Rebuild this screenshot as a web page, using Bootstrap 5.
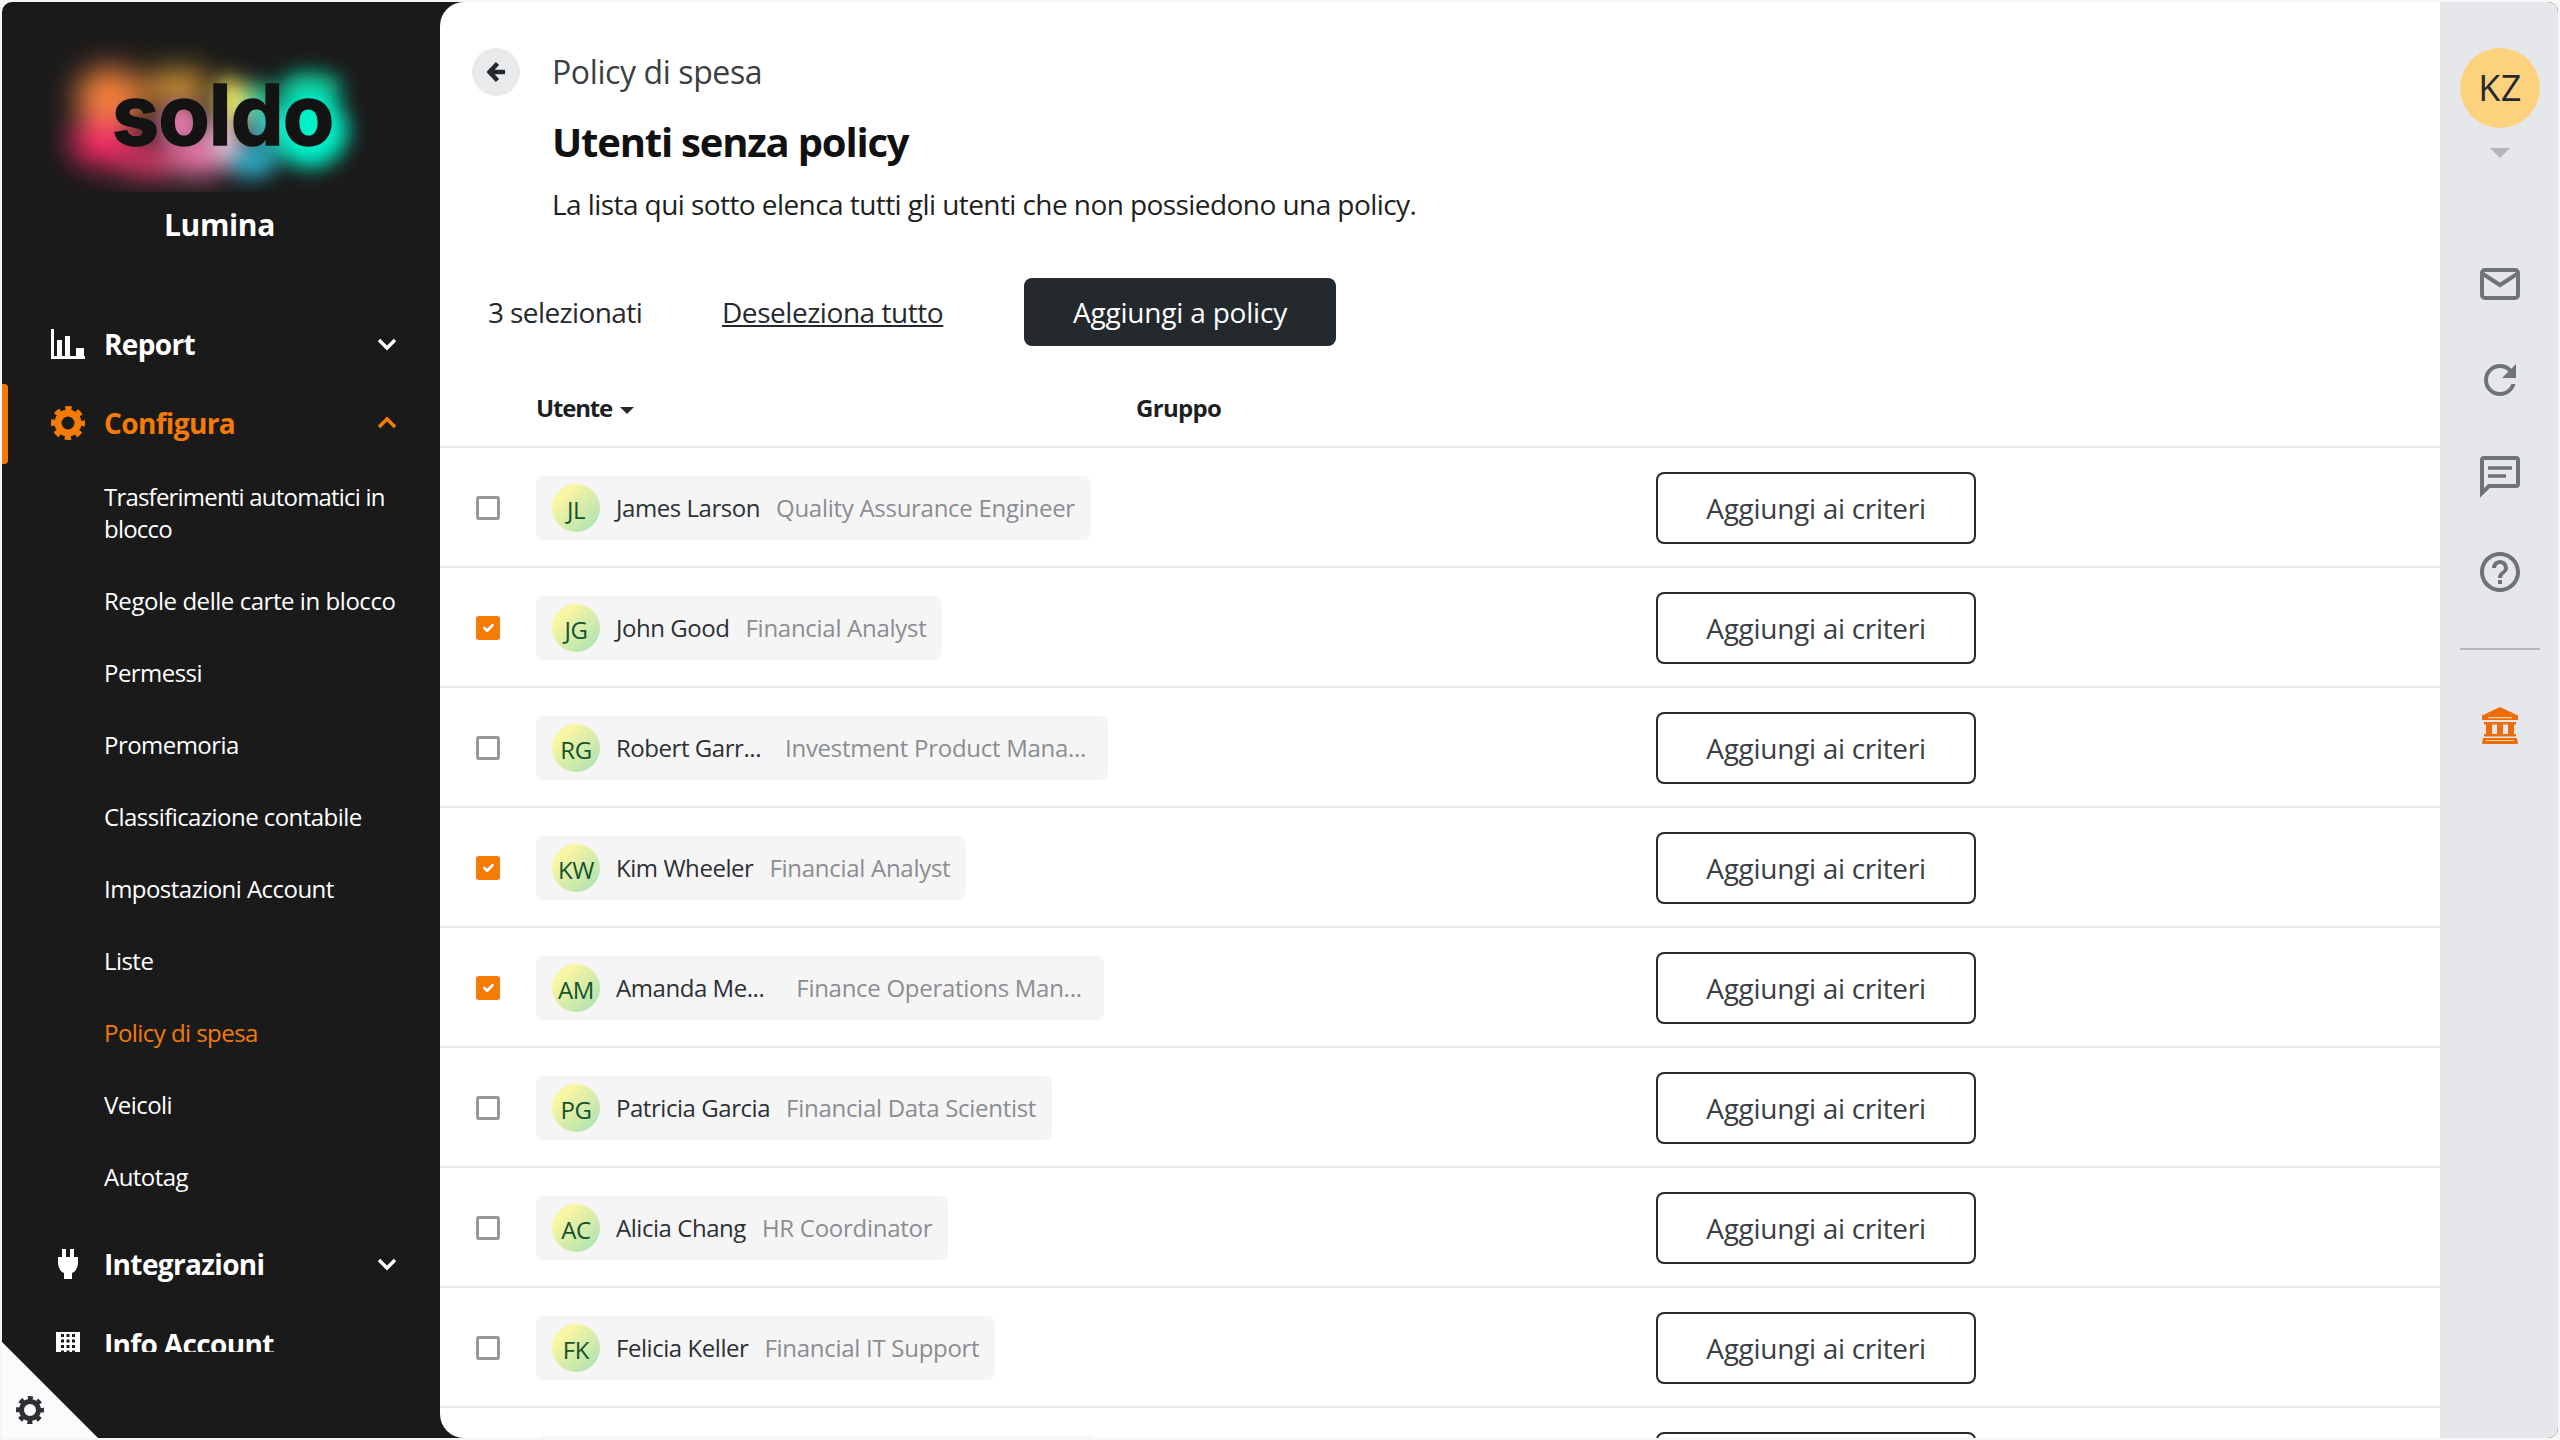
<!DOCTYPE html>
<html lang="it">
<head>
<meta charset="utf-8">
<title>Utenti senza policy</title>
<link href="https://cdn.jsdelivr.net/npm/bootstrap@5.3.0/dist/css/bootstrap.min.css" rel="stylesheet">
<style>
:root{--ink:#24292d;--org:#f47b06;--dark:#1a1a1a}
html,body{height:100%}
body{background:#f6f6f7;overflow:hidden;padding:2px;font-family:"Open Sans","Liberation Sans",sans-serif;color:var(--ink);font-size:24px;letter-spacing:-.35px}
.app-shell{height:1436px;background:var(--dark);border-radius:10px}
.side{width:438px;flex:none;color:#fff}
.logo-svg{display:block;width:438px;height:190px}
.org-name{font-size:30px;font-weight:700;line-height:40px;text-align:center;margin:13px 0 59px -3px;letter-spacing:-.35px}
.side-scroll{height:1048px;overflow:hidden}
.nav-main{height:80px;padding-left:48px;padding-right:43px;font-size:28px;font-weight:700;gap:18px;position:relative;letter-spacing:-.65px}
.nav-main.on{color:var(--org);height:77px}
.nav-main.on::before{content:"";position:absolute;left:0;top:0;width:6px;height:80px;background:var(--org);border-radius:0 4px 4px 0}
.nav-ico{width:36px;flex:none;display:flex;justify-content:center}
.nav-sub{padding:20px 30px 20px 102px;font-size:24px;line-height:32px;letter-spacing:-.55px}
.nav-sub.on{color:var(--org)}
.sub-end{margin-bottom:11px}
.sub-tight{letter-spacing:-.8px}
.sub-wide{letter-spacing:-.45px}
.corner{position:absolute;left:0;bottom:0;width:96px;height:96px;background:#fbfbfb;clip-path:polygon(0 0,100% 100%,0 100%)}
.corner svg{position:absolute;left:14px;bottom:14px}
.content{background:#fff;border-radius:24px 0 0 24px;overflow:hidden;min-width:0}
.crumb{padding:46px 0 0 32px;gap:32px}
.back{width:48px;height:48px;background:#e9eaec;border-radius:50%;padding:0;border:0}
.crumb-txt{font-size:32px;line-height:48px;color:#3a3f43;letter-spacing:-.4px}
.ttl{font-size:40px;line-height:48px;font-weight:700;margin:22px 0 0 112px;color:#111;letter-spacing:-1.2px}
.lead-txt{font-size:28px;line-height:40px;margin:18px 0 0 112px;letter-spacing:-.57px;color:#1d1f21}
.tools{margin:54px 0 0 48px;height:68px}
.tool-txt{font-size:28px;letter-spacing:-.6px}
.sel{width:234px}
.desel{width:302px;color:var(--ink);letter-spacing:-.45px}
.btn-add{background:var(--ink);color:#fff;font-size:28px;width:312px;height:68px;padding:0;border-radius:8px;letter-spacing:-.2px;border:0}
.btn-add:hover{background:var(--ink);color:#fff}
.thead{height:100px;padding:46px 0 0 96px;font-size:24px;font-weight:700;line-height:32px;color:#1c1f22;letter-spacing:-.7px}
.th-user{width:600px;letter-spacing:-1.2px}
.th-caret{display:inline-block;border:7px solid transparent;border-top-color:#24292d;border-bottom:0;margin:0 0 3px 8px}
.urow{height:120px;border-top:2px solid #e9e9eb;padding-left:36px;padding-top:2px}
.form-check-input.chk{width:24px;height:24px;margin:0 36px 0 0;border:3px solid #97989b;border-radius:3px;background-color:#fff;flex:none;float:none}
.form-check-input.chk:checked{background-color:var(--org);border-color:var(--org)}
.user-col{width:1120px;flex:none}
.chip{height:64px;padding:0 16px;background:#f5f5f6;border-radius:8px;gap:16px;font-size:24px;white-space:nowrap;letter-spacing:-.45px}
.chip-cut{padding-right:22px}
.chip-void{width:561px;background:#f5f5f6;height:64px;border-radius:8px}
.ava{width:48px;height:48px;border-radius:50%;background:linear-gradient(135deg,#f8f5a4 25%,#a6e0b2 100%);color:#14532d;font-size:24px;flex:none;padding-top:3px;letter-spacing:-.4px}
.uname{color:#2c3034}
.urole{color:#8b8d91;letter-spacing:-.28px}
.btn-crit{width:320px;height:72px;padding:0;font-size:28px;color:#3a3f43;border:2px solid var(--ink);border-radius:8px;background:#fff;letter-spacing:-.3px}
.rail{width:118px;flex:none;background:#e6e7ea;border-radius:0 10px 10px 0;padding:46px 0 0 2px}
.kz{width:80px;height:80px;border-radius:50%;background:#fdd27e;font-size:36px;color:var(--ink);letter-spacing:.5px}
.kz-caret{border:10px solid transparent;border-top-color:#b5b6ba;border-bottom:0;margin:20px 0 102px}
.rail-ico{height:96px}
.rail-hr{width:80px;height:2px;background:#b5b6ba;margin:4px 0 52px}
</style>
</head>
<body>
<div class="app-shell d-flex">
  <aside class="side position-relative overflow-hidden">
    <svg class="logo-svg" viewBox="0 0 438 190" role="img" aria-label="soldo">
      <defs>
        <filter id="bl1" x="-60%" y="-60%" width="220%" height="220%"><feGaussianBlur stdDeviation="15"/></filter>
        <filter id="bl2" x="-60%" y="-60%" width="220%" height="220%"><feGaussianBlur stdDeviation="10"/></filter>
      </defs>
      <g filter="url(#bl1)">
        <ellipse cx="108" cy="95" rx="34" ry="30" fill="#f5823a"/>
        <ellipse cx="100" cy="140" rx="32" ry="24" fill="#fb2c68"/>
        <ellipse cx="148" cy="158" rx="34" ry="16" fill="#ee3a70"/>
        <ellipse cx="176" cy="86" rx="34" ry="18" fill="#dd9a35"/>
        <ellipse cx="198" cy="150" rx="30" ry="24" fill="#f57cb0"/>
      </g>
      <g filter="url(#bl2)">
        <ellipse cx="178" cy="122" rx="20" ry="20" fill="#ea7cb0"/>
        <ellipse cx="228" cy="100" rx="14" ry="26" fill="#f5e860"/>
        <ellipse cx="222" cy="140" rx="14" ry="22" fill="#efc4da"/>
        <ellipse cx="250" cy="158" rx="26" ry="18" fill="#2ba5bd"/>
        <ellipse cx="256" cy="100" rx="16" ry="20" fill="#28cf90"/>
        <ellipse cx="260" cy="124" rx="14" ry="14" fill="#47c3cf"/>
        <ellipse cx="308" cy="86" rx="32" ry="16" fill="#10c595"/>
        <ellipse cx="308" cy="128" rx="38" ry="38" fill="#00f0c8"/>
      </g>
      <text x="110" y="143" font-family="Inter, 'Liberation Sans', sans-serif" font-weight="700" font-size="84" fill="#131313" stroke="#131313" stroke-width="1.500" textLength="222" lengthAdjust="spacing">soldo</text>
    </svg>
    <div class="org-name">Lumina</div>
    <nav class="side-scroll">
      <div class="nav-main d-flex align-items-center">
        <span class="nav-ico"><svg width="34" height="30" viewBox="0 0 34 30"><path fill="#fff" d="M0 0h3v27h31v3H0zM6 11h5v16H6zM14 7h5v20h-5zM25 19h8v8h-8z"/></svg></span>
        <span class="flex-grow-1">Report</span>
        <svg width="20" height="14" viewBox="0 0 20 14"><path d="M2 3l8 8 8-8" fill="none" stroke="#fff" stroke-width="3.4"/></svg>
      </div>
      <div class="nav-main on d-flex align-items-center">
        <span class="nav-ico"><svg width="34" height="34" viewBox="0 0 34 34"><circle cx="17" cy="17" r="10" fill="none" stroke="#f47b06" stroke-width="7"/><circle cx="17" cy="17" r="14" fill="none" stroke="#f47b06" stroke-width="6" stroke-dasharray="6 5" stroke-dashoffset="3"/></svg></span>
        <span class="flex-grow-1">Configura</span>
        <svg width="20" height="14" viewBox="0 0 20 14"><path d="M2 11l8-8 8 8" fill="none" stroke="#f47b06" stroke-width="3.4"/></svg>
      </div>
      <div class="nav-sub sub-tight">Trasferimenti automatici in blocco</div>
      <div class="nav-sub sub-wide">Regole delle carte in blocco</div>
      <div class="nav-sub">Permessi</div>
      <div class="nav-sub">Promemoria</div>
      <div class="nav-sub">Classificazione contabile</div>
      <div class="nav-sub">Impostazioni Account</div>
      <div class="nav-sub">Liste</div>
      <div class="nav-sub on">Policy di spesa</div>
      <div class="nav-sub">Veicoli</div>
      <div class="nav-sub sub-end">Autotag</div>
      <div class="nav-main d-flex align-items-center">
        <span class="nav-ico"><svg width="22" height="32" viewBox="0 0 22 32"><path fill="#fff" d="M5 1h4v8H5zM13 1h4v8h-4zM1 9h20v6c0 5-3 9-6 10v6H7v-6c-3-1-6-5-6-10z"/></svg></span>
        <span class="flex-grow-1">Integrazioni</span>
        <svg width="20" height="14" viewBox="0 0 20 14"><path d="M2 3l8 8 8-8" fill="none" stroke="#fff" stroke-width="3.4"/></svg>
      </div>
      <div class="nav-main d-flex align-items-center">
        <span class="nav-ico"><svg width="24" height="24" viewBox="0 0 24 24"><path fill="#fff" d="M0 0h24v24H0z"/><path fill="#1a1a1a" d="M5 2h3v3H5zM10.500 2h3v3h-3zM16 2h3v3h-3zM5 7.500h3v3H5zM10.500 7.500h3v3h-3zM16 7.500h3v3h-3zM5 13h3v3H5zM10.500 13h3v3h-3zM16 13h3v3h-3zM5 18.500h3v3H5zM10.500 18.500h3v3h-3zM16 18.500h3v3h-3z"/></svg></span>
        <span class="flex-grow-1">Info Account</span>
      </div>
    </nav>
    <div class="corner"><svg width="28" height="28" viewBox="0 0 28 28"><circle cx="14" cy="14" r="8.500" fill="none" stroke="#2c2f33" stroke-width="5"/><circle cx="14" cy="14" r="12" fill="none" stroke="#2c2f33" stroke-width="4" stroke-dasharray="5 4.420" stroke-dashoffset="2.500"/></svg></div>
  </aside>

  <main class="content flex-grow-1">
    <div class="crumb d-flex align-items-center">
      <button class="back btn d-flex align-items-center justify-content-center" aria-label="Indietro"><svg width="24" height="24" viewBox="0 0 24 24"><path d="M21 12H8M13.500 3.500L5.500 12l8 8.500" fill="none" stroke="#24292d" stroke-width="4.500"/></svg></button>
      <span class="crumb-txt">Policy di spesa</span>
    </div>
    <h1 class="ttl">Utenti senza policy</h1>
    <p class="lead-txt mb-0">La lista qui sotto elenca tutti gli utenti che non possiedono una policy.</p>
    <div class="tools d-flex align-items-center">
      <span class="tool-txt sel">3 selezionati</span>
      <a class="tool-txt desel" href="#">Deseleziona tutto</a>
      <button class="btn btn-add">Aggiungi a policy</button>
    </div>
    <div class="thead d-flex">
      <div class="th-user">Utente<span class="th-caret"></span></div>
      <div>Gruppo</div>
    </div>

    <div class="urow d-flex align-items-center">
      <input class="form-check-input chk" type="checkbox" aria-label="James Larson">
      <div class="user-col"><div class="chip d-inline-flex align-items-center"><span class="ava d-flex align-items-center justify-content-center">JL</span><span class="uname">James Larson</span><span class="urole">Quality Assurance Engineer</span></div></div>
      <button class="btn btn-crit">Aggiungi ai criteri</button>
    </div>
    <div class="urow d-flex align-items-center">
      <input class="form-check-input chk" type="checkbox" checked aria-label="John Good">
      <div class="user-col"><div class="chip d-inline-flex align-items-center"><span class="ava d-flex align-items-center justify-content-center">JG</span><span class="uname">John Good</span><span class="urole">Financial Analyst</span></div></div>
      <button class="btn btn-crit">Aggiungi ai criteri</button>
    </div>
    <div class="urow d-flex align-items-center">
      <input class="form-check-input chk" type="checkbox" aria-label="Robert Garr">
      <div class="user-col"><div class="chip chip-cut d-inline-flex align-items-center"><span class="ava d-flex align-items-center justify-content-center">RG</span><span class="uname">Robert Garr...</span><span class="urole ms-2">Investment Product Mana...</span></div></div>
      <button class="btn btn-crit">Aggiungi ai criteri</button>
    </div>
    <div class="urow d-flex align-items-center">
      <input class="form-check-input chk" type="checkbox" checked aria-label="Kim Wheeler">
      <div class="user-col"><div class="chip d-inline-flex align-items-center"><span class="ava d-flex align-items-center justify-content-center">KW</span><span class="uname">Kim Wheeler</span><span class="urole">Financial Analyst</span></div></div>
      <button class="btn btn-crit">Aggiungi ai criteri</button>
    </div>
    <div class="urow d-flex align-items-center">
      <input class="form-check-input chk" type="checkbox" checked aria-label="Amanda Me">
      <div class="user-col"><div class="chip chip-cut d-inline-flex align-items-center"><span class="ava d-flex align-items-center justify-content-center">AM</span><span class="uname">Amanda Me...</span><span class="urole ms-3">Finance Operations Man...</span></div></div>
      <button class="btn btn-crit">Aggiungi ai criteri</button>
    </div>
    <div class="urow d-flex align-items-center">
      <input class="form-check-input chk" type="checkbox" aria-label="Patricia Garcia">
      <div class="user-col"><div class="chip d-inline-flex align-items-center"><span class="ava d-flex align-items-center justify-content-center">PG</span><span class="uname">Patricia Garcia</span><span class="urole">Financial Data Scientist</span></div></div>
      <button class="btn btn-crit">Aggiungi ai criteri</button>
    </div>
    <div class="urow d-flex align-items-center">
      <input class="form-check-input chk" type="checkbox" aria-label="Alicia Chang">
      <div class="user-col"><div class="chip d-inline-flex align-items-center"><span class="ava d-flex align-items-center justify-content-center">AC</span><span class="uname">Alicia Chang</span><span class="urole">HR Coordinator</span></div></div>
      <button class="btn btn-crit">Aggiungi ai criteri</button>
    </div>
    <div class="urow d-flex align-items-center">
      <input class="form-check-input chk" type="checkbox" aria-label="Felicia Keller">
      <div class="user-col"><div class="chip d-inline-flex align-items-center"><span class="ava d-flex align-items-center justify-content-center">FK</span><span class="uname">Felicia Keller</span><span class="urole">Financial IT Support</span></div></div>
      <button class="btn btn-crit">Aggiungi ai criteri</button>
    </div>
    <div class="urow d-flex align-items-center">
      <input class="form-check-input chk" type="checkbox" aria-label="Riga successiva">
      <div class="user-col"><div class="chip-void"></div></div>
      <button class="btn btn-crit" aria-label="Aggiungi ai criteri"></button>
    </div>
  </main>

  <aside class="rail d-flex flex-column align-items-center">
    <div class="kz d-flex align-items-center justify-content-center">KZ</div>
    <div class="kz-caret"></div>
    <div class="rail-ico"><svg width="48" height="48" viewBox="0 0 24 24"><rect x="3" y="5" width="18" height="14" rx="1.500" fill="none" stroke="#6f7277" stroke-width="2"/><path d="M3.500 7l8.500 5.500L20.500 7" fill="none" stroke="#6f7277" stroke-width="2"/></svg></div>
    <div class="rail-ico"><svg width="48" height="48" viewBox="0 0 24 24"><path fill="#6f7277" d="M17.650 6.350C16.200 4.900 14.210 4 12 4c-4.420 0-7.990 3.580-7.990 8s3.570 8 7.990 8c3.730 0 6.840-2.550 7.730-6h-2.080c-.82 2.330-3.040 4-5.650 4-3.310 0-6-2.690-6-6s2.690-6 6-6c1.660 0 3.140.69 4.220 1.780L13 11h7V4l-2.350 2.350z"/></svg></div>
    <div class="rail-ico"><svg width="48" height="48" viewBox="0 0 24 24"><path d="M4 3h16a1 1 0 0 1 1 1v12a1 1 0 0 1-1 1H6.500L3 20.500V4a1 1 0 0 1 1-1z" fill="none" stroke="#6f7277" stroke-width="2"/><path d="M6 8h12M6 12h9" stroke="#6f7277" stroke-width="1.800"/></svg></div>
    <div class="rail-ico"><svg width="48" height="48" viewBox="0 0 24 24"><path fill="#6f7277" d="M11 18h2v-2h-2v2zm1-16C6.480 2 2 6.480 2 12s4.480 10 10 10 10-4.480 10-10S17.520 2 12 2zm0 18c-4.410 0-8-3.590-8-8s3.590-8 8-8 8 3.590 8 8-3.590 8-8 8zm0-14c-2.210 0-4 1.790-4 4h2c0-1.100.9-2 2-2s2 .9 2 2c0 2-3 1.750-3 5h2c0-2.250 3-2.500 3-5 0-2.210-1.790-4-4-4z"/></svg></div>
    <div class="rail-hr"></div>
    <svg width="48" height="48" viewBox="0 0 24 24"><path fill="#f06c0a" d="M12 2.500l9 4.200V9H3V6.700zM4 10h16v1.200H4zM5 11h3v5H5zM10.500 11h3v5h-3zM16 11h3v5h-3zM4 16h16v1.200H4zM3.500 18h17l.5 3H3z"/><path fill="#fbd3a8" d="M6 7.500h12v.6H6zM5 19h14v.5H5z"/></svg>
  </aside>
</div>
</body>
</html>
